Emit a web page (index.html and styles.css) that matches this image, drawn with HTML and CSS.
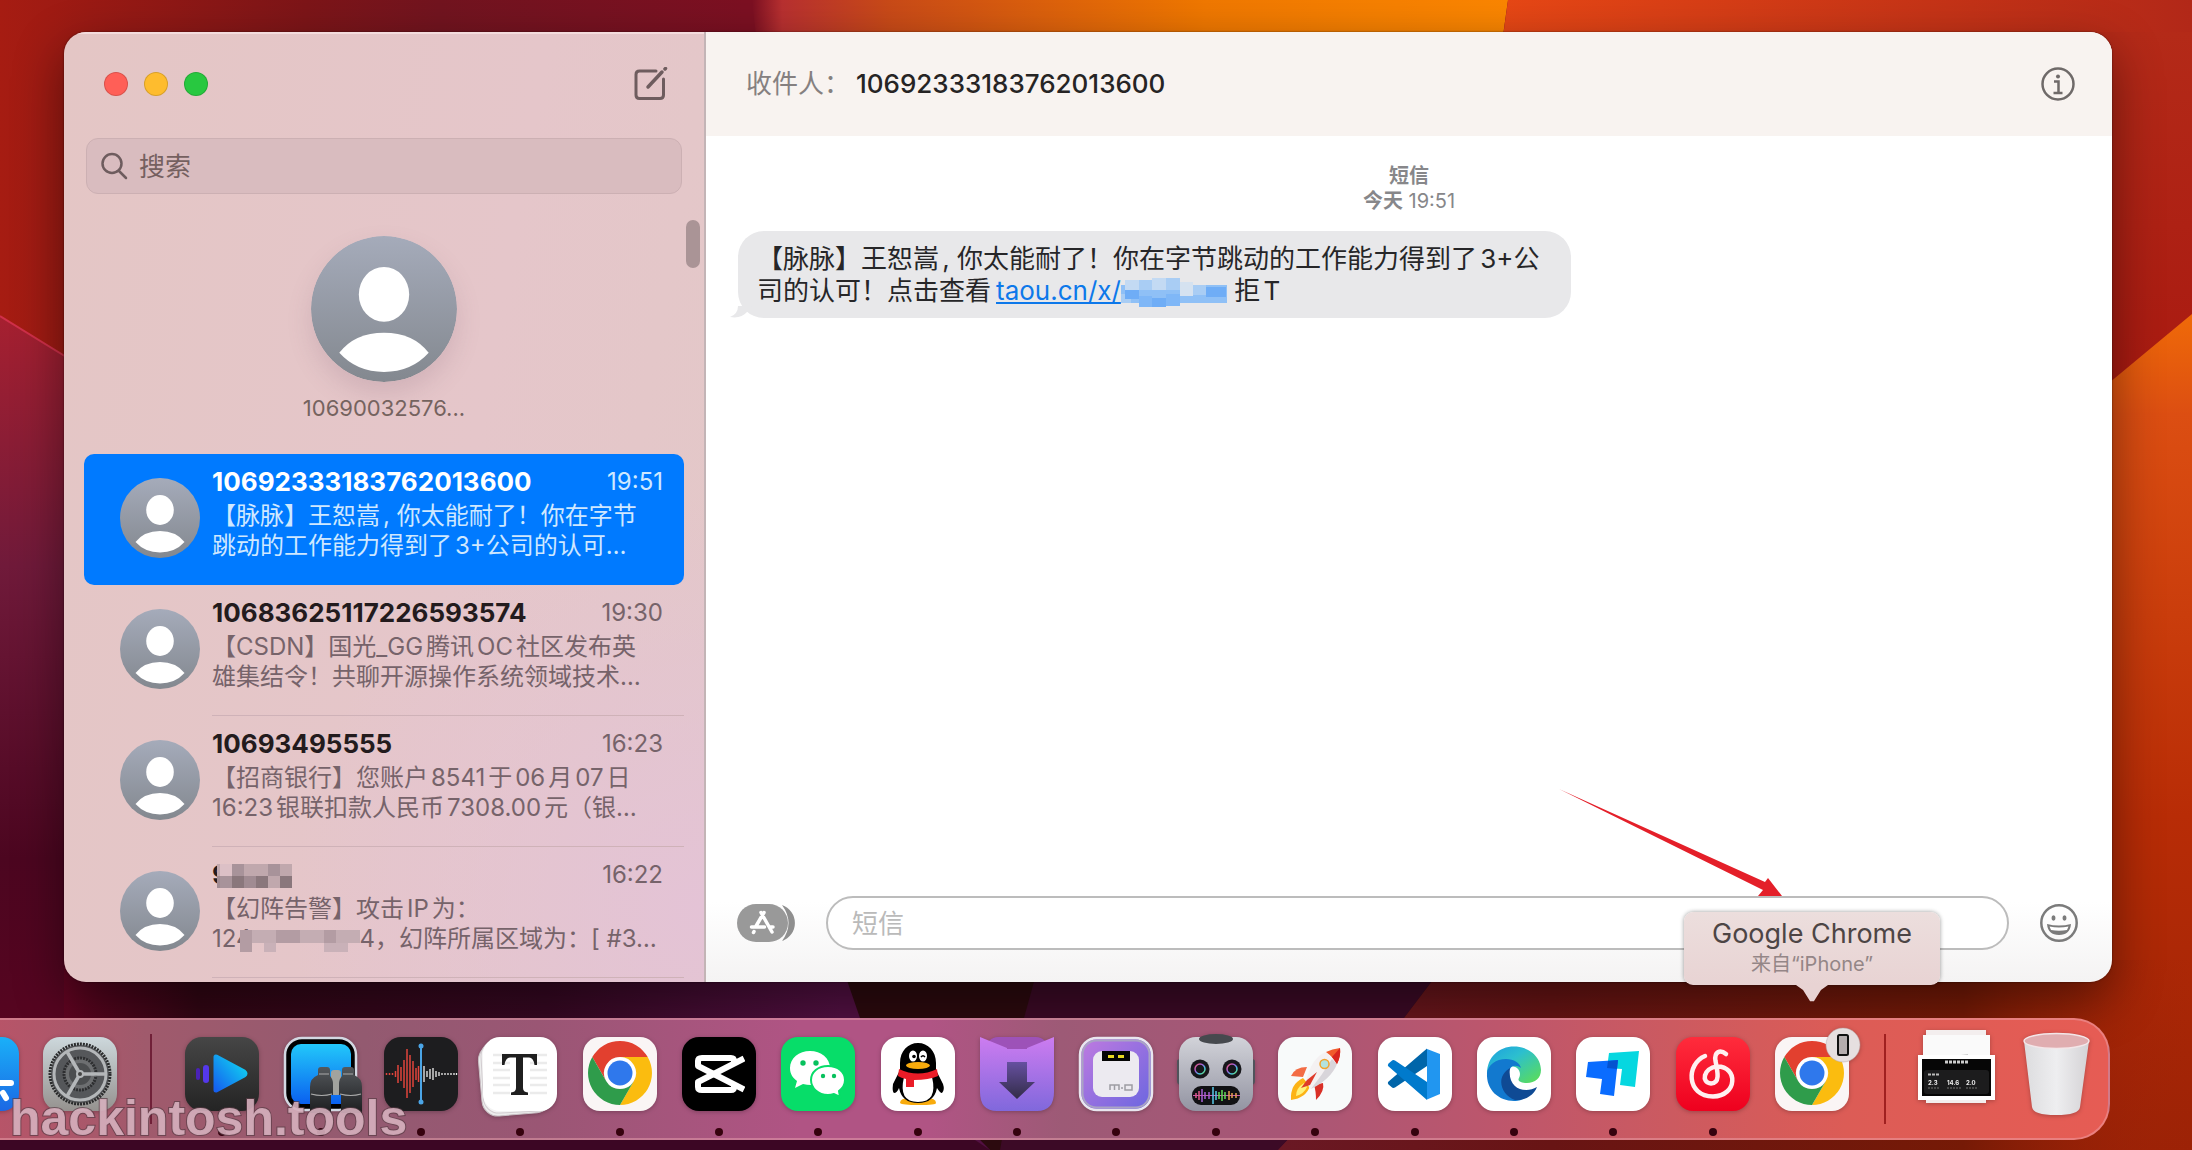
FILE: index.html
```html
<!DOCTYPE html>
<html lang="zh-CN">
<head>
<meta charset="utf-8">
<title>信息</title>
<link rel="stylesheet" href="styles.css">
</head>
<body>
<svg class="wallpaper" viewBox="0 0 2192 1150" preserveAspectRatio="none" aria-hidden="true">
  <defs>
    <linearGradient id="w-base" x1="0" x2="1" y1="0" y2="0"><stop offset="0" stop-color="#a61c12"/><stop offset=".14" stop-color="#7d1518"/><stop offset=".2" stop-color="#72141f"/><stop offset=".34" stop-color="#7c1022"/></linearGradient>
    <linearGradient id="w-org" x1="0" x2="1" y1="0" y2="0"><stop offset="0" stop-color="#7c1022"/><stop offset=".04" stop-color="#b83030"/><stop offset=".18" stop-color="#c94a18"/><stop offset=".6" stop-color="#f07800"/><stop offset="1" stop-color="#fb8600"/></linearGradient>
    <linearGradient id="w-red" x1="0" x2="1" y1="0" y2="0"><stop offset="0" stop-color="#ec4a15"/><stop offset="1" stop-color="#b22818"/></linearGradient>
    <linearGradient id="w-redv" x1="0" x2="0" y1="0" y2="1"><stop offset="0" stop-color="#b42a18"/><stop offset="1" stop-color="#a81810"/></linearGradient>
    <linearGradient id="w-left" x1="0" x2="0" y1="0" y2="1"><stop offset="0" stop-color="#a62030"/><stop offset=".3" stop-color="#701a3a"/><stop offset=".65" stop-color="#4c0620"/><stop offset="1" stop-color="#5e0420"/></linearGradient>
    <linearGradient id="w-right" x1="0" x2="0" y1="0" y2="1"><stop offset="0" stop-color="#f06a08"/><stop offset=".12" stop-color="#dc4e12"/><stop offset=".6" stop-color="#b82c06"/><stop offset="1" stop-color="#9c2206"/></linearGradient>
    <linearGradient id="w-bot" x1="0" x2="1" y1="0" y2="0"><stop offset="0" stop-color="#5e0420"/><stop offset=".1" stop-color="#320614"/><stop offset=".36" stop-color="#360822"/><stop offset=".58" stop-color="#521042"/></linearGradient>
    <linearGradient id="w-bot3" x1="0" x2="1" y1="0" y2="0"><stop offset="0" stop-color="#6a1824"/><stop offset=".3" stop-color="#681414"/><stop offset=".75" stop-color="#761a06"/><stop offset="1" stop-color="#a42408" stop-opacity="0"/></linearGradient>
  </defs>
  <rect width="2192" height="1150" fill="url(#w-base)"/>
  <path d="M752 0H1508L1480 200H775Z" fill="url(#w-org)"/>
  <path d="M1508 0H2192V500H1440Z" fill="url(#w-red)"/>
  <path d="M2100 32H2192V420H2100Z" fill="url(#w-redv)"/>
  <path d="M0 316L110 384V1150H0Z" fill="url(#w-left)"/>
  <path d="M0 316L110 384" stroke="#d0304a" stroke-width="2"/>
  <path d="M2192 314L2050 432V900H1278V1150H2192Z" fill="url(#w-right)"/>
  <rect x="64" y="960" width="1340" height="190" fill="url(#w-bot)"/>
  <path d="M840 960L860 1018L990 1150H1278L1440 982Z" fill="#2c0a0e"/>
  <path d="M1040 960L1024 1018L1000 1150H1278L1404 1018L1448 960Z" fill="#3c0a26"/>
  <path d="M0 1130H960L990 1150H0Z" fill="#3c0624"/>
  <path d="M1448 960L1404 1018L1278 1150H2192V960Z" fill="url(#w-bot3)"/>
</svg>

<main class="window">
  <aside class="sidebar">
    <div class="titlebar">
      <div class="lights">
        <button class="light close" aria-label="关闭"></button>
        <button class="light minimize" aria-label="最小化"></button>
        <button class="light zoom" aria-label="缩放"></button>
      </div>
      <button class="icon-button" aria-label="新信息">
        <svg width="34" height="34" viewBox="0 0 34 34" fill="none" stroke="#6e5c5e" stroke-width="3" stroke-linecap="round"><path d="M22 4H5.500Q2 4 2 7.500V28Q2 31.500 5.500 31.500H26Q29.500 31.500 29.500 28V12"/><path d="M14 20L28 5" stroke-width="3.500"/><path d="M31 2l.5-.5" stroke-width="3.500"/></svg>
      </button>
    </div>
    <label class="search">
      <svg width="28" height="28" viewBox="0 0 28 28" fill="none" stroke="#6e5c5e" stroke-width="2.500" stroke-linecap="round"><circle cx="11" cy="11.500" r="9.500"/><path d="M18 19l7 7"/></svg>
      <input type="search" placeholder="搜索" aria-label="搜索">
    </label>
    <span class="scrollbar"></span>
    <button class="pinned">
      <svg class="avatar big" viewBox="0 0 80 80"><use href="#person"/></svg>
      <span>10690032576...</span>
    </button>
    <ul class="threads">
      <li><button class="thread selected">
        <svg class="avatar" viewBox="0 0 80 80"><use href="#person"/></svg>
        <span class="summary"><span class="line"><strong>10692333183762013600</strong><time>19:51</time></span>
        <span class="preview">【脉脉】王恕嵩, 你太能耐了！你在字节<br>跳动的工作能力得到了3+公司的认可…</span></span>
      </button></li>
      <li><button class="thread">
        <svg class="avatar" viewBox="0 0 80 80"><use href="#person"/></svg>
        <span class="summary"><span class="line"><strong>10683625117226593574</strong><time>19:30</time></span>
        <span class="preview">【CSDN】国光_GG腾讯OC社区发布英<br>雄集结令！共聊开源操作系统领域技术…</span></span>
      </button></li>
      <li><button class="thread">
        <svg class="avatar" viewBox="0 0 80 80"><use href="#person"/></svg>
        <span class="summary"><span class="line"><strong>10693495555</strong><time>16:23</time></span>
        <span class="preview">【招商银行】您账户8541于06月07日<br>16:23银联扣款人民币7308.00元（银…</span></span>
      </button></li>
      <li><button class="thread">
        <svg class="avatar" viewBox="0 0 80 80"><use href="#person"/></svg>
        <span class="summary"><span class="line"><strong>9<svg class="mosaic name" width="75" height="24" viewBox="0 0 75 24" shape-rendering="crispEdges"><path fill="#c0a8ad" d="M0 0h75v24H0z"/><path fill="#dcc0c6" d="M3 0h12v12H3z"/><path fill="#a8939a" d="M15 0h12v12H15zM51 0h12v12H51zM3 12h12v12H3z"/><path fill="#8a777c" d="M15 12h12v12H15zM39 12h12v12H39zM63 12h12v12H63z"/><path fill="#a08b92" d="M27 12h12v12H27zM0 12h3v12H0z"/></svg></strong><time>16:22</time></span>
        <span class="preview">【幻阵告警】攻击IP为：<br>124<svg class="mosaic ip" width="120" height="24" viewBox="0 0 120 24" shape-rendering="crispEdges"><path fill="#c4adb3" d="M0 2h120v13H0z"/><path fill="#b39ca3" d="M0 2h12v22H0zM36 2h24v13H36zM84 2h12v13H84z"/><path fill="#c9b1b8" d="M24 15h12v9H24zM84 15h24v9H84z"/></svg>4，幻阵所属区域为：[ #3…</span></span>
      </button></li>
    </ul>
  </aside>

  <section class="chat">
    <header class="chat-header">
      <p class="recipient"><span class="to">收件人：</span><span>10692333183762013600</span></p>
      <button class="icon-button" aria-label="详细信息">
        <svg width="36" height="36" viewBox="0 0 36 36" fill="none" stroke="#6f6a69" stroke-width="2.500"><circle cx="18" cy="18" r="15.500"/><path d="M14 15.500h4.500V27M13.500 27h9"/><circle cx="18" cy="10.500" r="2" fill="#6f6a69" stroke="none"/></svg>
      </button>
    </header>
    <div class="messages">
      <p class="stamp"><b>短信</b><br><b>今天</b> 19:51</p>
      <p class="bubble">【脉脉】王恕嵩, 你太能耐了！你在字节跳动的工作能力得到了3+公<br>司的认可！点击查看<a href="#link">taou.cn/x/<svg class="mosaic url" width="106" height="29" viewBox="0 0 106 29" shape-rendering="crispEdges"><path fill="#8fc0f6" d="M0 7h106v18H0z"/><path fill="#c3daf3" d="M4 2h14v10H4zM31 0h14v12H31z"/><path fill="#a9cdf4" d="M18 2h13v10H18zM45 0h14v12H45zM72 7h13v10H72zM0 16h10v9H0z"/><path fill="#6fadf6" d="M4 12h14v9H4zM31 20h14v9H31zM85 9h20v10H85z"/><path fill="#7fb7f7" d="M18 18h13v11H18zM45 16h14v12H45z"/><path fill="#d5e2f0" d="M59 4h13v14H59z"/></svg></a> 拒T
        <svg class="tail" width="22" height="12" viewBox="0 0 22 12"><path d="M8 0Q8 8 0 11Q11 13 17 6L22 0Z" fill="#e8e8ea"/></svg>
      </p>
    </div>
    <form class="composer">
      <button class="icon-button" type="button" aria-label="App">
        <svg width="58" height="38" viewBox="0 0 58 38"><path d="M45 1a19 19 0 0 1 0 36q13-18 0-36z" fill="#8f8f8f"/><rect width="51" height="38" rx="19" fill="#999"/><g stroke="#fff" stroke-width="3.500" stroke-linecap="round" fill="none"><path d="M27 8.500L18.500 23M24 8.500L35 28M14.500 23h13M33 23h3M17 27.500l-.5 1"/></g></svg>
      </button>
      <input class="message-input" type="text" placeholder="短信" aria-label="短信">
      <button class="icon-button" type="button" aria-label="表情符号">
        <svg width="38" height="38" viewBox="0 0 38 38"><circle cx="19" cy="19" r="17.700" fill="none" stroke="#7b7b7b" stroke-width="2.500"/><ellipse cx="13.500" cy="14" rx="2" ry="2.700" fill="#7b7b7b"/><ellipse cx="24.500" cy="14" rx="2" ry="2.700" fill="#7b7b7b"/><path d="M7 20q12 3 24 0q-1 11-12 11T7 20z" fill="#7b7b7b"/><path d="M9.500 22.500q9.500 2 19 0l-1.500 3.500q-8 1.500-16 0z" fill="#fff"/></svg>
      </button>
    </form>
    <svg class="arrow" width="224" height="108" viewBox="0 0 224 108"><path d="M0 0L206 93L209 89L223 107H199L204 101Z" fill="#e41f29"/></svg>
  </section>
</main>

<nav class="dock" aria-label="程序坞">
  <div class="group">
    <button class="app" aria-label="App Store">
      <svg viewBox="0 0 74 74"><rect width="74" height="74" rx="17" fill="url(#g-store)"/><path d="M50 46h16M58 56l3 5" stroke="#fff" stroke-width="6" stroke-linecap="round"/></svg>
    </button>
    <button class="app" aria-label="系统设置">
      <svg viewBox="0 0 74 74"><rect width="74" height="74" rx="17" fill="url(#g-set)"/><circle cx="37" cy="37" r="29" fill="#55575a"/><circle cx="37" cy="37" r="30" fill="none" stroke="#2a2b2c" stroke-width="3" stroke-dasharray="2 1"/><circle cx="37" cy="37" r="26" fill="none" stroke="#b4b7b9" stroke-width="3"/><circle cx="37" cy="37" r="16" fill="#6d6f71" stroke="#2d2e30" stroke-width="3" stroke-dasharray="2 1"/><circle cx="37" cy="37" r="11" fill="#4c4e50"/><path d="M37 37H62M37 37L24.500 15.500M37 37L24.500 58.500" stroke="#b4b7b9" stroke-width="3.500"/><circle cx="37" cy="37" r="4" fill="#b4b7b9"/><circle cx="37" cy="37" r="2" fill="#444"/></svg>
    </button>
  </div>
  <span class="separator"></span>
  <div class="group apps">
    <button class="app running" aria-label="视频播放器">
      <svg viewBox="0 0 74 74"><rect width="74" height="74" rx="17" fill="url(#g-dark)"/><path d="M31 20V53L59 38Q61 36.500 59 35Z" fill="url(#g-play)" stroke="url(#g-play)" stroke-width="5" stroke-linejoin="round"/><rect x="18" y="28" width="6" height="18" rx="3" fill="#5438ea"/><rect x="11" y="31" width="4" height="12" rx="2" fill="#4a22b8"/></svg>
    </button>
    <button class="app running" aria-label="远程桌面">
      <svg viewBox="0 0 74 74"><rect x="1" y="1" width="71" height="72" rx="17" fill="#000" stroke="#d3d8e2" stroke-width="2.500"/><rect x="7" y="7" width="60" height="60" rx="10" fill="url(#g-remote)"/><rect x="47" y="33" width="10" height="25" rx="3" fill="#a2a39e"/><g fill="url(#g-bino)"><path d="M34 33q0-3 3-3h6q3 0 3 3v6q3 3 3 8v11H47V76H26V50q0-9 8-12z"/><path d="M70 33q0-3-3-3h-6q-3 0-3 3v6q-3 3-3 8v11h2V76H78V50q0-9-8-12z"/></g><path d="M27 57q11 3 21 0M56 57q11 3 21 0M35 37h10M59 37h10" stroke="#aaa" stroke-width="1.200" fill="none"/></svg>
    </button>
    <button class="app running" aria-label="语音备忘录">
      <svg viewBox="0 0 74 74"><rect width="74" height="74" rx="17" fill="#1d1d1f"/><path d="M2.500 36v2M5.500 36v2M8.500 36v2M11.500 34v6M14 28v18M17 30v14M20 23v28M23 12v49M26 18v38M29 24v26M32 31v12M34.500 29v16" stroke="#e0443c" stroke-width="1.500"/><path d="M40 29v16M43 34v6M46 32v10M49 31v12M52 34v6M55 35v4M58 36v2M61 36v2M64 36v2M67 36v2M70 36v2M72.500 36v2" stroke="#eee" stroke-width="1.300"/><path d="M37 9v56" stroke="#4ba5e6" stroke-width="2"/><circle cx="37" cy="9" r="2.500" fill="#4ba5e6"/><circle cx="37" cy="65" r="2.500" fill="#4ba5e6"/></svg>
    </button>
    <button class="app running" aria-label="Typora">
      <svg viewBox="0 0 74 74"><rect x="-3" y="5" width="70" height="72" rx="16" fill="#ececec" stroke="#c9bfc4" transform="rotate(-5 37 40)"/><rect x="-1" y="2" width="72" height="73" rx="16" fill="#f4f4f4" stroke="#d2ccd0" transform="rotate(-3 37 37)"/><rect width="74" height="74" rx="17" fill="#fff"/><path d="M10 18h54M10 26h54M10 33h54M10 41h54M10 48h54M10 56h54" stroke="#ebebeb" stroke-width="2.500"/><path d="M27 16h20v42H27z" fill="#fff"/><path d="M19 17H54V28H51.500Q50.500 20.500 46 20.500H40V51Q40 55 45 55.500V58H28V55.500Q33 55 33 51V20.500H27Q22.500 20.500 21.500 28H19Z" fill="#1f1f1f"/></svg>
    </button>
    <button class="app running" aria-label="Google Chrome"><svg viewBox="0 0 74 74"><use href="#chrome"/></svg></button>
    <button class="app running" aria-label="剪映">
      <svg viewBox="0 0 74 74"><rect width="74" height="74" rx="17" fill="#000"/><g fill="none" stroke="#fff" stroke-width="6" stroke-linejoin="round"><path d="M52 25V24Q52 21 49 21H20Q16 21 16 24V29L62 52.500"/><path d="M52 49V50Q52 53 49 53H20Q16 53 16 50V45L62 21.500"/></g><path d="M63 15v14h9V15zM63 44v14h9V44z" fill="#000"/></svg>
    </button>
    <button class="app running" aria-label="微信">
      <svg viewBox="0 0 74 74"><rect width="74" height="74" rx="17" fill="#07dd69"/><path d="M29 14c-11 0-20 7-20 17 0 6 3 10 7 13l-2 7 8-4q4 1 8 1c10 0 19-7 19-17S40 14 29 14z" fill="#fff"/><path d="M47 29c-10 0-17 6-17 14s7 15 17 15q3 0 6-1l6 3-1-6c4-3 6-6 6-11 0-8-7-14-17-14z" fill="#fff" stroke="#07dd69" stroke-width="2"/><g fill="#07c15d"><circle cx="22" cy="26" r="2.700"/><circle cx="35" cy="26" r="2.700"/><circle cx="42" cy="39" r="2.200"/><circle cx="53" cy="39" r="2.200"/></g></svg>
    </button>
    <button class="app running" aria-label="QQ">
      <svg viewBox="0 0 74 74"><rect width="74" height="74" rx="17" fill="#fff"/><path d="M19 66q0-5 10-5h16q10 0 10 5 0 2-17 2T19 66z" fill="#f8ab0c"/><path d="M37 6C27 6 19 14 19 26v7L12 47q-1 8 1 9 3 0 5-5 3 15 19 15t19-15q3 5 5 5 3-3 1-9L55 33v-7C55 14 47 6 37 6z" fill="#000"/><path d="M23 40h28q6 25-14 25T23 40z" fill="#fff"/><path d="M18 32q19 9 38 0l1 7q-9 4-24 4v7H25v-8q-5-1-8-3z" fill="#ea1c27"/><ellipse cx="32" cy="19" rx="4" ry="5.500" fill="#fff"/><ellipse cx="42" cy="19" rx="4" ry="5.500" fill="#fff"/><circle cx="33" cy="19.500" r="1.800"/><path d="M40 20q2-2.500 4 0" fill="none" stroke="#000" stroke-width="1.500"/><ellipse cx="37" cy="28.500" rx="12" ry="3.500" fill="#f8ab0c"/></svg>
    </button>
    <button class="app running" aria-label="Downie">
      <svg viewBox="0 0 74 74"><rect x="6" width="62" height="40" rx="12" fill="#9d52b8"/><path d="M0 0L27 11V12H47V11L74 0V55Q74 74 57 74H17Q0 74 0 55Z" fill="url(#g-down)"/><path d="M27 25H47V45H55L37 62L19 45H27Z" fill="url(#g-downarrow)"/></svg>
    </button>
    <button class="app running" aria-label="Mos">
      <svg viewBox="0 0 74 74"><rect x="1" y="1" width="72" height="72" rx="17" fill="url(#g-mos)" stroke="#e9e6ef" stroke-width="2.500"/><rect x="3.500" y="3.500" width="67" height="67" rx="14" fill="none" stroke="#a9a3c4" stroke-width="2"/><rect x="14" y="14" width="46" height="46" rx="9" fill="#eceaf0"/><path d="M23 14h28v10H23z" fill="#050505"/><path d="M29 18h6v3h-6zM39 18h6v3h-6z" fill="#e8d820"/><path d="M31 53v-5h9v5M35.500 48v5M46 48h7v5h-7z" fill="none" stroke="#9d9da3" stroke-width="1.500"/><circle cx="43" cy="51" r="1" fill="#9d9da3"/></svg>
    </button>
    <button class="app running" aria-label="机器人">
      <svg viewBox="0 0 74 74"><path d="M-2 24q0-2 4-2v26q-4 0-4-4zM76 24q0-2-4-2v26q4 0 4-4z" fill="#50535b"/><rect width="74" height="74" rx="17" fill="url(#g-robot)"/><ellipse cx="37" cy="2" rx="17" ry="5" fill="#46494e"/><circle cx="21" cy="32" r="9.500" fill="#17171b"/><circle cx="53" cy="32" r="9.500" fill="#17171b"/><circle cx="21" cy="32" r="5" fill="none" stroke="url(#g-rainbow)" stroke-width="1.500"/><circle cx="53" cy="32" r="5" fill="none" stroke="url(#g-rainbow)" stroke-width="1.500"/><rect x="13" y="49" width="48" height="19" rx="9" fill="#111114"/><path d="M14 58.500H61" stroke="#c85ab0"/><path d="M17 56v5M20 54v9" stroke="#e0588c" stroke-width="1.500"/><path d="M23 52v13M26 55v7M30 55v7" stroke="#a860d8" stroke-width="1.500"/><path d="M34 50v17M37 54v9" stroke="#58c8e8" stroke-width="1.500"/><path d="M40 55v7M43 53v11M46 55v7" stroke="#62dc58" stroke-width="1.500"/><path d="M50 54v9M53 56v5M57 56v5" stroke="#e8a050" stroke-width="1.500"/></svg>
    </button>
    <button class="app running" aria-label="火箭">
      <svg viewBox="0 0 74 74"><rect width="74" height="74" rx="17" fill="#f8fafa"/><path d="M29 30q-12 0-16 9l12 1z" fill="#f36c45"/><path d="M36 48l9-2q2 8-7 17 0-9-2-15z" fill="#d93027"/><path d="M25 41q-13 6-12 22 15-2 19-14z" fill="#fcb316"/><path d="M26 46q-8 5-8 13 8-2 11-9z" fill="#fff27a"/><path d="M28 44Q34 20 48 15L59 27Q53 41 32 52z" fill="#f4f1f2"/><path d="M33 52Q53 42 59 27L54 22Q44 38 33 52z" fill="#d8d5da"/><path d="M48 15q6-3 14-4 1 8-3 16-4-7-11-12z" fill="#f15a2b"/><path d="M62 11q1 8-3 16l-5-7z" fill="#d8241f"/><path d="M39 35L29 43L23 51L32 48Z" fill="#de3a2a"/><circle cx="46.500" cy="27" r="4.500" fill="#b3e3dd" stroke="#f2a32e" stroke-width="1.500"/></svg>
    </button>
    <button class="app running" aria-label="Visual Studio Code">
      <svg viewBox="0 0 74 74"><rect width="74" height="74" rx="17" fill="#fff"/><path d="M49 12L62 17V57L49 62.500Z" fill="#2196f0"/><path d="M10 45L49 11.500V29L17 50.500Q15 51.500 13.500 50L10.500 47.500Q9.500 46 10 45Z" fill="#0065a9"/><path d="M10 29L49 63V45L17 23.500Q15 22.500 13.500 24L10.500 26.500Q9.500 28 10 29Z" fill="#007acc"/></svg>
    </button>
    <button class="app running" aria-label="Microsoft Edge">
      <svg viewBox="0 0 74 74"><rect width="74" height="74" rx="17" fill="#fff"/><path d="M10 37C10 20 22 9.500 37 9.500S64 20 64 33c0 8-6 13-14 13-6 0-10-2-8-5 3-6-1-12-9-12S14 32 10 37z" fill="url(#g-edge)"/><path d="M10 36c1-8 9-14 19-14 8 0 14 4 15 9-4-3-9-3-11 1-8 14 3 27 13 30-4 2-7 2-9 2C22 64 9 53 10 36z" fill="#1279cf"/><path d="M33 31C18 40 24 58 38 63c10 1 19-5 22-13-12 7-30 2-27-19z" fill="#0f4a94"/></svg>
    </button>
    <button class="app running" aria-label="ToDesk">
      <svg viewBox="0 0 74 74"><rect width="74" height="74" rx="17" fill="#fff"/><path d="M33 16L63 14L59 50L44 48L46 32L31 31Z" fill="#06d7e0"/><path d="M12 25L42 23L38 59L24 57L26 42L10 40Z" fill="#0a6cff"/><path d="M32 24L42 23L41 32L31 31Z" fill="#0552cf"/></svg>
    </button>
    <button class="app running" aria-label="网易云音乐">
      <svg viewBox="0 0 74 74"><rect width="74" height="74" rx="17" fill="url(#g-netease)"/><path d="M29 19C10 27 10 59 37 59.500 62 59 62 29 41 29.500 27 31 25 46 35 46.500 44 46 42 36 39.500 24 38 15 44 12 50 17" fill="none" stroke="#fff0f0" stroke-width="4.500" stroke-linecap="round"/></svg>
    </button>
    <button class="app" aria-label="Google Chrome，来自 iPhone">
      <svg viewBox="0 0 74 74"><use href="#chrome"/><circle cx="68" cy="8" r="17" fill="#e6dfe0" stroke="#b9a7a7" stroke-width=".5"/><rect x="63" y="-2" width="10" height="20" rx="1.500" fill="#b5adae" stroke="#111" stroke-width="2"/></svg>
      <span class="tooltip"><span class="tip-title">Google Chrome</span><span class="tip-sub">来自“iPhone”</span></span>
    </button>
  </div>
  <span class="separator"></span>
  <div class="group extras">
    <button class="app" aria-label="下载">
      <svg viewBox="0 0 74 74"><path d="M7-7H67V66H7z" fill="#f3eeee"/><path d="M4-2H71V40H4z" fill="#fafafa"/><path d="M35 19l14-2v4z" fill="#ccc"/><rect x="-1" y="18" width="77" height="45" fill="#fff"/><rect x="3" y="22" width="69" height="37" fill="#060606"/><rect x="5" y="33" width="65" height="24" rx="3" fill="#1c1c1d"/><path d="M26 25h24" stroke="#ccc" stroke-width="3" stroke-dasharray="3 1"/><path d="M9 37.500h12" stroke="#bbb" stroke-width="2" stroke-dasharray="3 1"/><path d="M9 51h12M28 51h14M47 51h12" stroke="#555" stroke-width="1.500" stroke-dasharray="2 1"/><g class="shot-text"><text x="9" y="48">2.3</text><text x="28" y="48">14.6</text><text x="47" y="48">2.0</text></g></svg>
    </button>
    <button class="app" aria-label="废纸篓">
      <svg viewBox="0 0 74 74"><path d="M5 4L13 70Q14 78 37 78T61 70L70 4Z" fill="url(#g-trash)"/><ellipse cx="37.500" cy="4" rx="32.500" ry="7.500" fill="#e0adb0" stroke="#f3e6e8" stroke-width="1.500"/></svg>
    </button>
  </div>
</nav>
<p class="watermark">hackintosh.tools</p>

<svg class="defs" width="0" height="0" aria-hidden="true">
  <defs>
    <linearGradient id="g-person" x1="0" x2="0" y1="0" y2="1"><stop offset="0" stop-color="#a5abba"/><stop offset="1" stop-color="#83888f"/></linearGradient>
    <linearGradient id="g-store" x1="0" x2="0" y1="0" y2="1"><stop offset="0" stop-color="#1ab0f8"/><stop offset="1" stop-color="#1b68e4"/></linearGradient>
    <linearGradient id="g-set" x1="0" x2="0" y1="0" y2="1"><stop offset="0" stop-color="#cdd8dc"/><stop offset="1" stop-color="#95928f"/></linearGradient>
    <linearGradient id="g-dark" x1="0" x2="0" y1="0" y2="1"><stop offset="0" stop-color="#464646"/><stop offset="1" stop-color="#242424"/></linearGradient>
    <linearGradient id="g-play" x1="0" x2="1" y1="1" y2="0"><stop offset="0" stop-color="#1560f0"/><stop offset="1" stop-color="#10dcf0"/></linearGradient>
    <linearGradient id="g-remote" x1="0" x2="0" y1="0" y2="1"><stop offset="0" stop-color="#22c8fa"/><stop offset="1" stop-color="#0a60f0"/></linearGradient>
    <linearGradient id="g-bino" x1="0" x2="0" y1="0" y2="1"><stop offset="0" stop-color="#54585c"/><stop offset="1" stop-color="#1c1d1f"/></linearGradient>
    <linearGradient id="g-down" x1="0" x2="0" y1="0" y2="1"><stop offset="0" stop-color="#cd7cf0"/><stop offset="1" stop-color="#8068dc"/></linearGradient>
    <linearGradient id="g-downarrow" x1="0" x2="0" y1="0" y2="1"><stop offset="0" stop-color="#6650a0"/><stop offset="1" stop-color="#322c48"/></linearGradient>
    <linearGradient id="g-mos" x1="0" x2="1" y1="0" y2="1"><stop offset="0" stop-color="#c07ae0"/><stop offset="1" stop-color="#6a66e0"/></linearGradient>
    <linearGradient id="g-robot" x1="0" x2="0" y1="0" y2="1"><stop offset="0" stop-color="#d2d3d9"/><stop offset="1" stop-color="#9394a2"/></linearGradient>
    <linearGradient id="g-rainbow" x1="0" x2="1" y1="0" y2="1"><stop offset="0" stop-color="#f05a70"/><stop offset=".4" stop-color="#a060e0"/><stop offset=".7" stop-color="#40c8e0"/><stop offset="1" stop-color="#80e060"/></linearGradient>
    <linearGradient id="g-edge" x1="0" x2="1" y1="0" y2="1"><stop offset="0" stop-color="#1c9ee0"/><stop offset=".4" stop-color="#2cbfcf"/><stop offset="1" stop-color="#5fdf4f"/></linearGradient>
    <linearGradient id="g-netease" x1="0" x2="0" y1="0" y2="1"><stop offset="0" stop-color="#ff2c3c"/><stop offset="1" stop-color="#ee001e"/></linearGradient>
    <linearGradient id="g-trash" x1="0" x2="1" y1="0" y2="0"><stop offset="0" stop-color="#dcdcde"/><stop offset=".5" stop-color="#eeeef0"/><stop offset="1" stop-color="#d4d2d5"/></linearGradient>
    <symbol id="person" viewBox="0 0 80 80"><circle cx="40" cy="40" r="40" fill="url(#g-person)"/><ellipse cx="40" cy="32" rx="13.800" ry="15" fill="#fff"/><path d="M15.500 64Q24 53 40 53T64.500 64Q55 74.500 40 74.500T15.500 64Z" fill="#fff"/></symbol>
    <symbol id="chrome" viewBox="0 0 74 74"><rect width="74" height="74" rx="17" fill="#faf5f5"/><path d="M9.300 20A32 32 0 0 1 64.700 20H37A16 16 0 0 0 23.100 44Z" fill="#e2402f"/><path d="M64.700 20A32 32 0 0 1 37 68L50.900 44A16 16 0 0 0 37 20Z" fill="#fbbc0f"/><path d="M37 68A32 32 0 0 1 9.300 20L23.100 44A16 16 0 0 0 50.900 44Z" fill="#2f9c4b"/><circle cx="37" cy="36" r="15.500" fill="#fff"/><circle cx="37" cy="36" r="12.500" fill="#2f78ec"/></symbol>
  </defs>
</svg>
</body>
</html>
```
FILE: styles.css
```css
* { box-sizing: border-box; }

html, body { margin: 0; }

body {
  position: relative;
  display: flex;
  flex-direction: column;
  gap: 36px;
  min-height: 100vh;
  padding: 32px 0 10px;
  overflow: hidden;
  font-family: Inter, "Noto Sans CJK SC", sans-serif;
  font-size: 24px;
  text-autospace: normal;
  background: #3c0a26;
}

p, ul { margin: 0; padding: 0; }
ul { list-style: none; }

button, input {
  font: inherit;
  color: inherit;
  border: 0;
  background: none;
  padding: 0;
  margin: 0;
}

svg { display: block; flex: none; }

.wallpaper {
  position: absolute;
  inset: 0;
  width: 100%;
  height: 100%;
  z-index: -1;
}

.defs { position: absolute; }

/* Window */
.window {
  flex: 1;
  display: grid;
  grid-template-columns: 642px 1fr;
  margin: 0 80px 0 64px;
  border-radius: 22px;
  overflow: hidden;
  box-shadow: 0 0 2px rgba(0, 0, 0, .6), 0 18px 50px rgba(0, 0, 0, .45);
}

.sidebar {
  position: relative;
  padding: 0 20px;
  border-right: 2px solid #c3b4b6;
  background:
    radial-gradient(circle at 100% 92%, #e4c3d6, transparent 38%),
    linear-gradient(100deg, #e4c6c5, #e5c6ca 60%, #e3c8c8);
  box-shadow: inset 0 2px 0 #f3dcdd;
}

.titlebar {
  display: flex;
  align-items: center;
  justify-content: space-between;
  height: 104px;
  padding: 0 16px 0 20px;
}

.lights { display: flex; gap: 16px; }

.light {
  width: 24px;
  height: 24px;
  border-radius: 50%;
  border: 1px solid rgba(0, 0, 0, .15);
}

.close { background: #ff5f57; }
.minimize { background: #febc2e; }
.zoom { background: #28c840; }

.search {
  display: flex;
  align-items: center;
  gap: 10px;
  height: 56px;
  margin: 2px 2px 42px;
  padding: 0 14px;
  border: 1px solid #ccb0b3;
  border-radius: 12px;
  background: #d9bcbf;
}

.search input {
  flex: 1;
  min-width: 0;
  font-size: 26px;
  outline: 0;
}

.search input::placeholder { color: #75605f; opacity: 1; }

.scrollbar {
  position: absolute;
  top: 188px;
  right: 4px;
  width: 14px;
  height: 48px;
  border-radius: 7px;
  background: #aa9496;
}

.pinned {
  display: flex;
  flex-direction: column;
  align-items: center;
  gap: 12px;
  width: 100%;
  margin-bottom: 32px;
  font-size: 22px;
  line-height: 28px;
  color: #75635f;
}

.avatar { width: 80px; height: 80px; }

.avatar.big {
  width: 146px;
  height: 146px;
  border-radius: 50%;
  box-shadow: 0 12px 24px rgba(120, 90, 110, .18);
}

.thread {
  display: flex;
  gap: 12px;
  width: 100%;
  padding-left: 36px;
  text-align: left;
  color: #76636a;
}

.thread .avatar { margin-top: 24px; }

.summary {
  flex: 1;
  min-width: 0;
  height: 131px;
  padding-top: 13px;
  line-height: 30px;
  white-space: nowrap;
  border-bottom: 1px solid #cfb2b8;
}

.line {
  display: flex;
  justify-content: space-between;
  height: 30px;
  padding-right: 21px;
  margin-bottom: 4px;
}

.line strong {
  font-size: 26px;
  font-weight: 700;
  color: #231b1d;
}

.preview { display: block; }

.selected {
  color: #cfe8ff;
  background: #007aff;
  border-radius: 10px;
}

.selected .summary { border-color: transparent; }
.selected strong { color: #fff; }

.mosaic { display: inline-block; vertical-align: middle; }
.mosaic.name { margin-left: -12px; vertical-align: -4px; }
.mosaic.ip { margin-left: -12px; }

/* Conversation */
.chat {
  position: relative;
  display: flex;
  flex-direction: column;
  background: linear-gradient(#fff calc(100% - 80px), #f4f3f3);
}

.chat-header {
  display: flex;
  align-items: center;
  justify-content: space-between;
  height: 104px;
  padding: 0 36px 0 40px;
  font-size: 26px;
  font-weight: 500;
  color: #262424;
  background: #f8f3f0;
}

.recipient {
  display: flex;
  gap: 6px;
  line-height: 32px;
}

.recipient .to { font-weight: 400; color: #858080; }

.messages {
  flex: 1;
  padding: 28px 32px;
}

.stamp {
  margin-bottom: 17px;
  font-size: 20px;
  line-height: 25px;
  text-align: center;
  color: #87878a;
}

.stamp b { font-weight: 600; }

.bubble {
  position: relative;
  width: fit-content;
  padding: 12px 31px 11px 19px;
  font-size: 26px;
  line-height: 32px;
  white-space: nowrap;
  color: #262628;
  border-radius: 26px;
  background: #e8e8ea;
}

.bubble a {
  margin-left: 5px;
  color: #0d78ea;
  text-autospace: no-autospace;
}

.tail {
  position: absolute;
  left: -8px;
  bottom: 0;
}

.composer {
  display: flex;
  align-items: center;
  gap: 31px;
  padding: 0 34px 32px 31px;
}

.message-input {
  flex: 1;
  min-width: 0;
  height: 54px;
  padding: 0 24px;
  font-size: 26px;
  border: 2px solid #bcbcbc;
  border-radius: 27px;
  background: #fff;
  outline: 0;
}

.message-input::placeholder { color: #bababa; opacity: 1; }

.arrow {
  position: absolute;
  right: 329px;
  bottom: 85px;
}

/* Dock */
.dock {
  display: flex;
  align-items: flex-start;
  margin: 0 82px 0 -74px;
  padding: 17px 15px 2px 17px;
  height: 122px;
  border: 2px solid rgba(240, 170, 180, .45);
  border-radius: 36px;
  background: linear-gradient(90deg, #b85468 3%, #a05a6c 10%, #935a70 20%, #9a5674 28%, #b05484 40%, #b05484 46%, #9d5a76 52%, #a85676 62%, #bd566c 72%, #cc5a60 80%, #dc5c56 88%, #e65c54);
}

.group { display: flex; gap: 24px; }
.group.apps { flex: 1; justify-content: space-between; gap: 0; }
.group.extras { gap: 26px; }

.separator {
  width: 2px;
  height: 90px;
  margin: -3px 33px 0;
  background: #702038;
}

.apps + .separator { background: #a02020; margin-left: 35px; }

.app {
  position: relative;
  display: flex;
  flex-direction: column;
  align-items: center;
  width: 74px;
}

.app > svg {
  width: 74px;
  height: 74px;
  overflow: visible;
  filter: drop-shadow(0 1px 2px rgba(0, 0, 0, .25));
}

.running::after {
  content: "";
  width: 8px;
  height: 8px;
  margin-top: 17px;
  border-radius: 50%;
  background: #36020e;
}

.shot-text {
  font-size: 6px;
  font-weight: 700;
  fill: #eee;
}

.tooltip {
  position: absolute;
  left: -91px;
  bottom: calc(100% + 52px);
  width: 256px;
  padding: 5px 0 8px;
  display: flex;
  flex-direction: column;
  align-items: center;
  white-space: nowrap;
  border-radius: 9px;
  background: linear-gradient(#ecdedd, #e8d3d3);
  box-shadow: 0 0 4px rgba(0, 0, 0, .4);
}

.tooltip::after {
  content: "";
  position: absolute;
  top: 100%;
  left: 112px;
  width: 32px;
  height: 17px;
  background: #e8d3d3;
  clip-path: polygon(0 0, 100% 0, 78% 30%, 56% 96%, 44% 96%, 22% 30%);
}

.tip-title { font-size: 27px; line-height: 34px; color: #4d4545; }
.tip-sub { font-size: 20px; line-height: 26px; color: #948687; }

.watermark {
  position: absolute;
  left: 10px;
  bottom: 4px;
  font-family: "Liberation Sans", sans-serif;
  font-size: 50px;
  font-weight: 700;
  line-height: 56px;
  color: rgba(214, 176, 190, .9);
  -webkit-text-stroke: 2px rgba(90, 60, 70, .7);
  paint-order: stroke fill;
}
```
